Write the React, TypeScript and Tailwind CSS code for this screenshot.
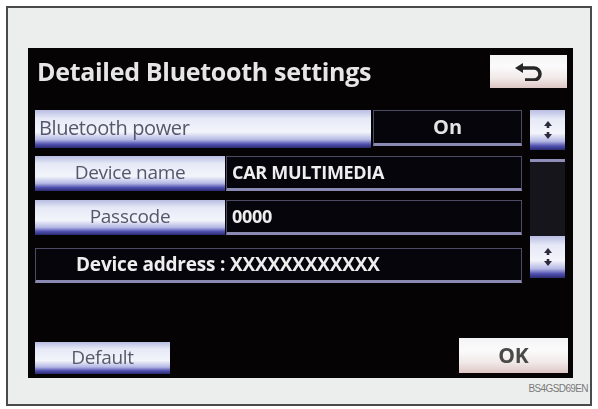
import React from 'react';

const labelBtn =
    'bg-[linear-gradient(to_bottom,#b9bde2_0%,#e6e9f6_22%,#f3f5fb_58%,#b4b8e4_78%,#5050b0_90%,#2a2a70_100%)]';
const whiteBtn =
    'bg-[linear-gradient(to_bottom,#f4f4f6_0%,#fbfbfb_35%,#f1e9e8_70%,#dcc6c4_100%)]';
const field = 'bg-[#07050c] border border-[#4c4c66] border-b-[3px] border-b-[#8a8ab2]';

function ReturnIcon() {
    return (
        <svg width="32" height="18" viewBox="0 0 32 18">
            <path d="M2 5 L10 0 L10 10 Z" fill="#262626"/>
            <path d="M9 5 H21 A6 6 0 0 1 21 17 H12" fill="none" stroke="#262626" strokeWidth="3.5"/>
        </svg>
    );
}

function ScrollIcon() {
    return (
        <svg width="10" height="20" viewBox="0 0 10 20">
            <path d="M5 1 L9 6 L1 6 Z" fill="#2a2a3a"/>
            <rect x="3.7" y="5" width="2.6" height="3" fill="#2a2a3a"/>
            <rect x="3.7" y="12" width="2.6" height="3" fill="#2a2a3a"/>
            <path d="M5 19 L9 14 L1 14 Z" fill="#2a2a3a"/>
        </svg>
    );
}

function ScrollButton({tall}: {tall: number}) {
    return (
        <div
            className={`${labelBtn} flex items-center justify-center w-[35px]`}
            style={{height: tall}}
        >
            <ScrollIcon/>
        </div>
    );
}

export default function App() {
    return (
        <div className="w-[598px] h-[409px] bg-white pt-[6px] pl-[6px] font-['Open_Sans','Liberation_Sans',sans-serif]">
            <div className="w-[586px] h-[400px] border-2 border-[#4a4a4a] bg-[#eceeed] pl-[20px] pt-[40px] flex flex-col">
                <div className="w-[545px] h-[330px] bg-[#050304] pl-[7px] pr-[6px] pt-[7px] flex flex-col blur-[0.4px]">
                    {/* title bar */}
                    <div className="flex items-center justify-between h-[33px]">
                        <div className="ml-[2px] text-[25px] font-bold text-[#e6e6e6] tracking-[-0.3px]">
                            Detailed Bluetooth settings
                        </div>
                        <div className={`${whiteBtn} w-[77px] h-[33px] flex items-center justify-center`}>
                            <ReturnIcon/>
                        </div>
                    </div>

                    <div className="flex mt-[22px]">
                        {/* rows */}
                        <div className="w-[487px] flex flex-col">
                            <div className="flex h-[38px]">
                                <div className={`${labelBtn} w-[336px] flex items-center pl-[4px] pb-[2px] text-[20px] tracking-[-0.4px] text-[#55576c]`}>
                                    Bluetooth power
                                </div>
                                <div className={`${field} flex-1 ml-[2px] h-[36px] flex items-center justify-center text-[20px] font-bold text-[#e4e4e4]`}>
                                    On
                                </div>
                            </div>
                            <div className="flex h-[35px] mt-[8px]">
                                <div className={`${labelBtn} w-[190px] flex items-center justify-center pb-[2px] text-[19px] tracking-[-0.3px] text-[#55576c]`}>
                                    Device name
                                </div>
                                <div className={`${field} flex-1 ml-[1px] flex items-center pl-[5px] text-[18px] font-bold tracking-[-0.3px] text-[#eeeeee]`}>
                                    CAR MULTIMEDIA
                                </div>
                            </div>
                            <div className="flex h-[35px] mt-[9px]">
                                <div className={`${labelBtn} w-[190px] flex items-center justify-center pb-[2px] text-[19px] tracking-[-0.3px] text-[#55576c]`}>
                                    Passcode
                                </div>
                                <div className={`${field} flex-1 ml-[1px] flex items-center pl-[5px] text-[18px] font-bold tracking-[-0.3px] text-[#eeeeee]`}>
                                    0000
                                </div>
                            </div>
                            <div className={`${field} h-[35px] mt-[13px] flex items-center pl-[40px] text-[19px] font-bold tracking-[-0.2px] text-[#eeeeee]`}>
                                Device address : XXXXXXXXXXXX
                            </div>
                        </div>

                        {/* scroll column */}
                        <div className="ml-[8px] w-[35px] flex flex-col">
                            <ScrollButton tall={40}/>
                            <div className="h-[9px]"/>
                            <div className="h-[3px] bg-[#8e8eb8]"/>
                            <div className="h-[74px] bg-[#16151c]"/>
                            <ScrollButton tall={42}/>
                        </div>
                    </div>

                    {/* bottom buttons */}
                    <div className="flex justify-between items-end mt-auto mb-[4px]">
                        <div className={`${labelBtn} w-[135px] h-[32px] flex items-center justify-center pb-[2px] text-[19px] tracking-[-0.3px] text-[#585a6a]`}>
                            Default
                        </div>
                        <div className={`${whiteBtn} w-[109px] h-[35px] mr-[-1px] mb-[1px] flex items-center justify-center text-[21px] font-bold text-[#4a4a4a]`}>
                            OK
                        </div>
                    </div>
                </div>
                <div className="mt-[5px] mr-[2px] self-end text-[10px] leading-[12px] tracking-[-0.6px] text-[#7a7a7a] font-['Liberation_Sans',sans-serif]">
                    BS4GSD69EN
                </div>
            </div>
        </div>
    );
}
